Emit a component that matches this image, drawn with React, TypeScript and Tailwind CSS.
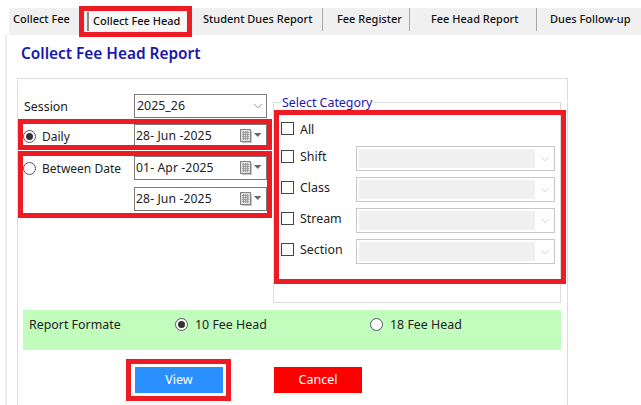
import { ChevronDown } from "lucide-react";

const tabs = [
  { label: "Collect Fee", w: "w-[78px]", pl: "pl-[4px]" },
  { label: "Collect Fee Head", w: "w-[107px]", pl: "", active: true },
  { label: "Student Dues Report", w: "w-[129px]", pl: "pl-[9px]", sep: true },
  { label: "Fee Register", w: "w-[87px]", pl: "pl-[14px]", sep: true },
  { label: "Fee Head Report", w: "w-[127px]", pl: "pl-[21px]", sep: true },
  { label: "Dues Follow-up", w: "w-[95px]", pl: "pl-[13px]" },
];

function Radio({ on }: { on?: boolean }) {
  return (
    <span className="w-[13px] h-[13px] rounded-full border border-[#555] bg-white flex items-center justify-center shrink-0">
      {on && <span className="w-[7px] h-[7px] rounded-full bg-[#333]" />}
    </span>
  );
}

function CalendarIcon() {
  return (
    <svg width="22" height="14" viewBox="0 0 22 14" className="shrink-0">
      <rect x="2" y="2" width="10" height="12" fill="#c4c4c4" />
      <rect x="0.5" y="0.5" width="10" height="12" fill="#e0e0e0" stroke="#858585" />
      <path d="M2 3.5h7M2 5.5h7M2 7.5h7M2 9.5h7M3.5 2v9M5.5 2v9M7.5 2v9" stroke="#a0a0a0" strokeWidth="1" fill="none" />
      <path d="M14 4h7.5l-3.75 4z" fill="#5f6a75" />
    </svg>
  );
}

function DateBox({ value, className }: { value: string; className?: string }) {
  return (
    <div className={`w-[133px] h-[24px] border border-[#7a7a7a] bg-white flex items-center justify-between pl-[1px] pr-[4px] ${className ?? ""}`}>
      <span className="pt-[1px] text-[12.2px] tracking-[0.1px] text-[#222] whitespace-pre">{value}</span>
      <CalendarIcon />
    </div>
  );
}

function CategoryRow({ label }: { label: string }) {
  return (
    <div className="flex h-[25px]">
      <span className="w-[13px] h-[13px] mt-[4px] border border-[#444] bg-white shrink-0" />
      <span className="w-[56px] ml-[6px] mt-[2px] text-[12.4px] leading-[18px] text-[#222]">{label}</span>
      <div className="w-[199px] h-[25px] border border-[#c8c8c8] bg-white flex items-center pl-[2px] pr-[2px]">
        <div className="w-[176px] h-[19px] bg-[#f0f0f0]" />
        <ChevronDown size={14} strokeWidth={1} className="ml-[3px] mt-[1px] text-[#b4b4b4]" />
      </div>
    </div>
  );
}

export default function App() {
  return (
    <div className="relative w-[641px] h-[405px] overflow-hidden bg-white font-['Noto_Sans',sans-serif]">
      <div className="pt-[8px] pl-[9px]">
        <div className="flex h-[27px] bg-[#f0f0f0]">
          {tabs.map((t) => (
            <div key={t.label} className={`${t.w} ${t.pl} h-[23px] flex items-center shrink-0 ${t.sep ? "border-r border-[#a8a8a8]" : ""}`}>
              {t.active ? (
                <div className="h-[19px] w-[99px] mt-[4px] pl-[4px] bg-[#f8f8f8] border-l-2 border-[#8a8a8a] flex items-center text-[11px] font-medium text-[#111] whitespace-nowrap">
                  {t.label}
                </div>
              ) : (
                <span className="pb-[1px] text-[11px] font-medium text-[#111] whitespace-nowrap">{t.label}</span>
              )}
            </div>
          ))}
        </div>
      </div>

      <div className="ml-[5px] border-l-2 border-[#ececec] pl-[10px] h-[370px]">
        <h1 className="pl-[4px] pt-[8px] h-[43px] text-[15.4px] leading-[22px] font-semibold text-[#1818b0]">Collect Fee Head Report</h1>

        <div className="w-[551px] h-[330px] border-t border-x border-[#dcdcdc] pl-[5px]">
          <div className="flex">
            <div className="w-[244px] pt-[15px] pl-[1px]">
              <div className="flex items-center h-[24px]">
                <span className="w-[110px] pt-[3px] text-[12.4px] text-[#222]">Session</span>
                <div className="w-[133px] h-[24px] border border-[#7a7a7a] bg-white flex items-center justify-between pl-[2px] pr-[1px]">
                  <span className="text-[12.4px] text-[#222]">2025_26</span>
                  <ChevronDown size={14} strokeWidth={1.2} className="text-[#666]" />
                </div>
              </div>
              <div className="flex items-center h-[24px] mt-[6px] -ml-[1px]">
                <Radio on />
                <span className="w-[92px] ml-[6px] pt-[2px] text-[12px] text-[#222]">Daily</span>
                <DateBox value="28- Jun -2025" />
              </div>
              <div className="flex items-center h-[24px] mt-[8px] -ml-[1px]">
                <Radio />
                <span className="w-[92px] ml-[6px] pt-[1px] text-[12px] text-[#222] whitespace-nowrap">Between Date</span>
                <DateBox value="01- Apr -2025" />
              </div>
              <DateBox value="28- Jun -2025" className="ml-[110px] mt-[7px]" />
            </div>

            <fieldset className="w-[288px] h-[208px] mt-[16px] ml-[6px] border border-[#dcdcdc] pl-[7px]">
              <legend className="px-[1px] pt-[1px] text-[12.4px] leading-[14px] text-[#1818b0]">Select Category</legend>
              <div className="flex flex-col gap-[6px] mt-[5px]">
                <div className="flex h-[25px]">
                  <span className="w-[13px] h-[13px] mt-[7px] border border-[#444] bg-white shrink-0" />
                  <span className="ml-[6px] mt-[6px] text-[12.4px] leading-[18px] text-[#222]">All</span>
                </div>
                <CategoryRow label="Shift" />
                <CategoryRow label="Class" />
                <CategoryRow label="Stream" />
                <CategoryRow label="Section" />
              </div>
            </fieldset>
          </div>

          <div className="w-[538px] h-[40px] mt-[7px] bg-[#c1fdbd] flex pt-[5px] text-[12.4px] leading-[20px] text-[#222]">
            <span className="w-[146px] pl-[6px]">Report Formate</span>
            <div className="flex w-[201px] h-[18px] items-center pl-[6px]">
              <Radio on />
              <span className="ml-[7px] pt-[2px]">10 Fee Head</span>
            </div>
            <div className="flex h-[18px] items-center">
              <Radio />
              <span className="ml-[7px] pt-[2px]">18 Fee Head</span>
            </div>
          </div>

          <div className="flex mt-[17px] pl-[112px] gap-[51px]">
            <button className="w-[88px] h-[26px] bg-[#2a8fff] text-white text-[12.5px]">View</button>
            <button className="w-[88px] h-[26px] bg-[#ff0000] text-white text-[12.5px]">Cancel</button>
          </div>
        </div>
      </div>

      {/* red annotation boxes drawn on the screenshot */}
      <div className="absolute left-[79px] top-[6px] w-[113px] h-[31px] border-[5px] border-[#ed1c24]" />
      <div className="absolute left-[18px] top-[119px] w-[254px] h-[31px] border-[5px] border-[#ed1c24]" />
      <div className="absolute left-[18px] top-[151px] w-[254px] h-[67px] border-[5px] border-[#ed1c24]" />
      <div className="absolute left-[274px] top-[110px] w-[292px] h-[174px] border-[5px] border-[#ed1c24]" />
      <div className="absolute left-[126px] top-[359px] w-[105px] h-[42px] border-[5px] border-[#ed1c24]" />
    </div>
  );
}
